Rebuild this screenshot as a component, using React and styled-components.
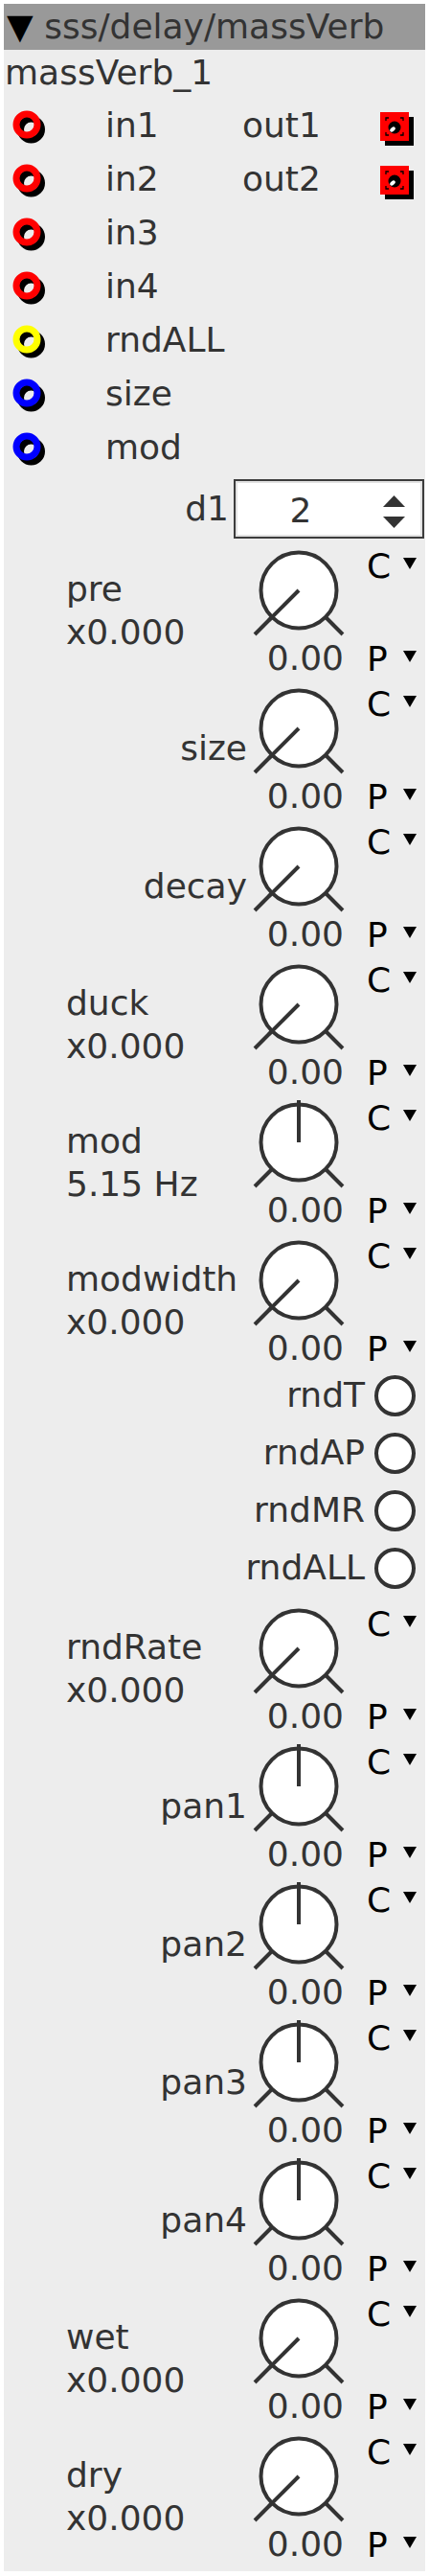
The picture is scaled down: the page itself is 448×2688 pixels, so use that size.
import React from 'react';
import styled, { createGlobalStyle } from 'styled-components';

const GlobalStyle = createGlobalStyle`
  html, body { margin: 0; padding: 0; background: #fff; }
  body { padding: 4px; font-family: "DejaVu Sans", "Liberation Sans", sans-serif; }
  * { box-sizing: border-box; }
`;

const Panel = styled.div`
  width: 440px;
  background: #ededed;
  display: flex;
  flex-direction: column;
  padding-bottom: 9px;
  color: #333;
  font-size: 36px;
  white-space: nowrap;
`;

const Header = styled.div`
  height: 48px;
  line-height: 48px;
  background: #999;
  padding-left: 3px;
  color: #333;
`;

const Caret = styled.span`
  color: #000;
`;

const InstanceName = styled.div`
  height: 51px;
  line-height: 48px;
  padding-left: 1px;
`;

const IORow = styled.div`
  height: 56px;
  line-height: 56px;
  display: grid;
  grid-template-columns: 106px 143px 144px 47px;
  align-items: center;
`;

const JackCell = styled.div`
  padding-left: 9px;
  display: flex;
  align-items: center;
`;

const JackSvg = styled.svg`
  display: block;
`;

const ParamRow = styled.div`
  height: 62px;
  margin-top: 5px;
  display: flex;
  justify-content: flex-end;
  gap: 5px;
  padding-right: 1px;
  line-height: 62px;
`;

const SpinBox = styled.div`
  width: 199px;
  border: 2px solid #3c3c3c;
  background: #fff;
  box-shadow: inset 0 0 0 2px #e2e2e2;
  display: flex;
  align-items: center;
`;

const SpinValue = styled.div`
  width: 136px;
  text-align: center;
  line-height: 50px;
  padding-top: 4px;
`;

const SpinArrows = styled.svg`
  display: block;
  margin-left: 18px;
`;

const KnobRow = styled.div`
  height: 133px;
  margin-top: 11px;
  display: grid;
  grid-template-columns: 259px 96px 85px;
`;

const LabelCell = styled.div`
  display: flex;
  flex-direction: column;
  justify-content: center;
  align-items: ${(p) => p.$align};
  padding: 0 5px 6px 65px;
  line-height: 45px;
`;

const KnobCell = styled.div`
  display: flex;
  flex-direction: column;
`;

const KnobSvg = styled.svg`
  display: block;
  overflow: visible;
`;

const ValueText = styled.div`
  line-height: 36px;
  text-align: right;
`;

const SideCell = styled.div`
  display: flex;
  flex-direction: column;
  justify-content: space-between;
  padding-left: 24px;
  color: #000;
  line-height: 36px;
`;

const ModeLine = styled.div`
  display: flex;
  align-items: flex-start;
  height: 36px;
`;

const ModeLetter = styled.span`
  width: 38px;
`;

const DropTri = styled.span`
  margin-top: 9px;
  width: 0;
  height: 0;
  border-left: 7px solid transparent;
  border-right: 7px solid transparent;
  border-top: 12px solid #000;
`;

const CheckRow = styled.div`
  height: 60px;
  line-height: 60px;
  display: flex;
  justify-content: flex-end;
  align-items: center;
  gap: 10px;
  padding-right: 10px;
`;

const CheckCircle = styled.div`
  width: 43px;
  height: 43px;
  border: 4px solid #333;
  border-radius: 50%;
  background: #fff;
`;

const Inlet = ({ color }) => (
  <JackSvg width="36" height="40" viewBox="0 0 36 40">
    <circle cx="19.5" cy="24" r="11" fill="none" stroke="#000" strokeWidth="7" />
    <circle cx="15" cy="19" r="11" fill="none" stroke={color} strokeWidth="7" />
  </JackSvg>
);

const Outlet = () => (
  <JackSvg width="36" height="42" viewBox="0 0 36 42">
    <rect x="5" y="12" width="30" height="30" fill="#000" />
    <rect x="0" y="7" width="30" height="30" fill="#f00" />
    <path
      d="M6 16 V13 H9 M21 13 H24 V16 M24 28 V31 H21 M9 31 H6 V28"
      fill="none"
      stroke="#000"
      strokeWidth="1.3"
    />
    <circle cx="15" cy="23" r="6.5" fill="#000" />
    <ellipse cx="13" cy="25" rx="3.2" ry="2" fill="#fff" transform="rotate(-40 13 25)" />
  </JackSvg>
);

const Knob = ({ angle }) => {
  const cx = 49;
  const cy = 43;
  const pt = (a, r) => {
    const t = (a * Math.PI) / 180;
    return [cx + r * Math.sin(t), cy - r * Math.cos(t)];
  };
  const [l1x, l1y] = pt(-135, 40);
  const [l2x, l2y] = pt(-135, 65);
  const [r1x, r1y] = pt(135, 40);
  const [r2x, r2y] = pt(135, 65);
  const [px, py] = pt(angle, 44);
  return (
    <KnobSvg width="96" height="96" viewBox="0 0 96 96">
      <circle cx={cx} cy={cy} r="39.5" fill="#fff" stroke="#333" strokeWidth="4" />
      <line x1={l1x} y1={l1y} x2={l2x} y2={l2y} stroke="#333" strokeWidth="4" />
      <line x1={r1x} y1={r1y} x2={r2x} y2={r2y} stroke="#333" strokeWidth="4" />
      <line x1={cx} y1={cy} x2={px} y2={py} stroke="#333" strokeWidth="4" />
    </KnobSvg>
  );
};

const KnobParam = ({ lines, angle }) => (
  <KnobRow>
    <LabelCell $align={lines.length > 1 ? 'flex-start' : 'flex-end'}>
      {lines.map((l) => (
        <span key={l}>{l}</span>
      ))}
    </LabelCell>
    <KnobCell>
      <Knob angle={angle} />
      <ValueText>0.00</ValueText>
    </KnobCell>
    <SideCell>
      <ModeLine>
        <ModeLetter>C</ModeLetter>
        <DropTri />
      </ModeLine>
      <ModeLine>
        <ModeLetter>P</ModeLetter>
        <DropTri />
      </ModeLine>
    </SideCell>
  </KnobRow>
);

const io = [
  { name: 'in1', color: '#f00', out: 'out1' },
  { name: 'in2', color: '#f00', out: 'out2' },
  { name: 'in3', color: '#f00' },
  { name: 'in4', color: '#f00' },
  { name: 'rndALL', color: '#ff0' },
  { name: 'size', color: '#00f' },
  { name: 'mod', color: '#00f' },
];

const knobsA = [
  { lines: ['pre', 'x0.000'], angle: -135 },
  { lines: ['size'], angle: -135 },
  { lines: ['decay'], angle: -135 },
  { lines: ['duck', 'x0.000'], angle: -135 },
  { lines: ['mod', '5.15 Hz'], angle: 0 },
  { lines: ['modwidth', 'x0.000'], angle: -135 },
];

const checks = ['rndT', 'rndAP', 'rndMR', 'rndALL'];

const knobsB = [
  { lines: ['rndRate', 'x0.000'], angle: -135 },
  { lines: ['pan1'], angle: 0 },
  { lines: ['pan2'], angle: 0 },
  { lines: ['pan3'], angle: 0 },
  { lines: ['pan4'], angle: 0 },
  { lines: ['wet', 'x0.000'], angle: -135 },
  { lines: ['dry', 'x0.000'], angle: -135 },
];

export default function App() {
  return (
    <>
      <GlobalStyle />
      <Panel>
        <Header>
          <Caret>▼</Caret> sss/delay/massVerb
        </Header>
        <InstanceName>massVerb_1</InstanceName>
        {io.map((r) => (
          <IORow key={r.name}>
            <JackCell>
              <Inlet color={r.color} />
            </JackCell>
            <span>{r.name}</span>
            <span>{r.out || ''}</span>
            <div>{r.out ? <Outlet /> : null}</div>
          </IORow>
        ))}
        <ParamRow>
          <span>d1</span>
          <SpinBox>
            <SpinValue>2</SpinValue>
            <SpinArrows width="24" height="42" viewBox="0 0 24 42">
              <polygon points="0,19 11.5,7 23,19" fill="#333" />
              <polygon points="0,29 23,29 11.5,41" fill="#333" />
            </SpinArrows>
          </SpinBox>
        </ParamRow>
        {knobsA.map((k) => (
          <KnobParam key={k.lines[0]} lines={k.lines} angle={k.angle} />
        ))}
        {checks.map((c) => (
          <CheckRow key={c}>
            <span>{c}</span>
            <CheckCircle />
          </CheckRow>
        ))}
        {knobsB.map((k) => (
          <KnobParam key={k.lines[0]} lines={k.lines} angle={k.angle} />
        ))}
      </Panel>
    </>
  );
}
